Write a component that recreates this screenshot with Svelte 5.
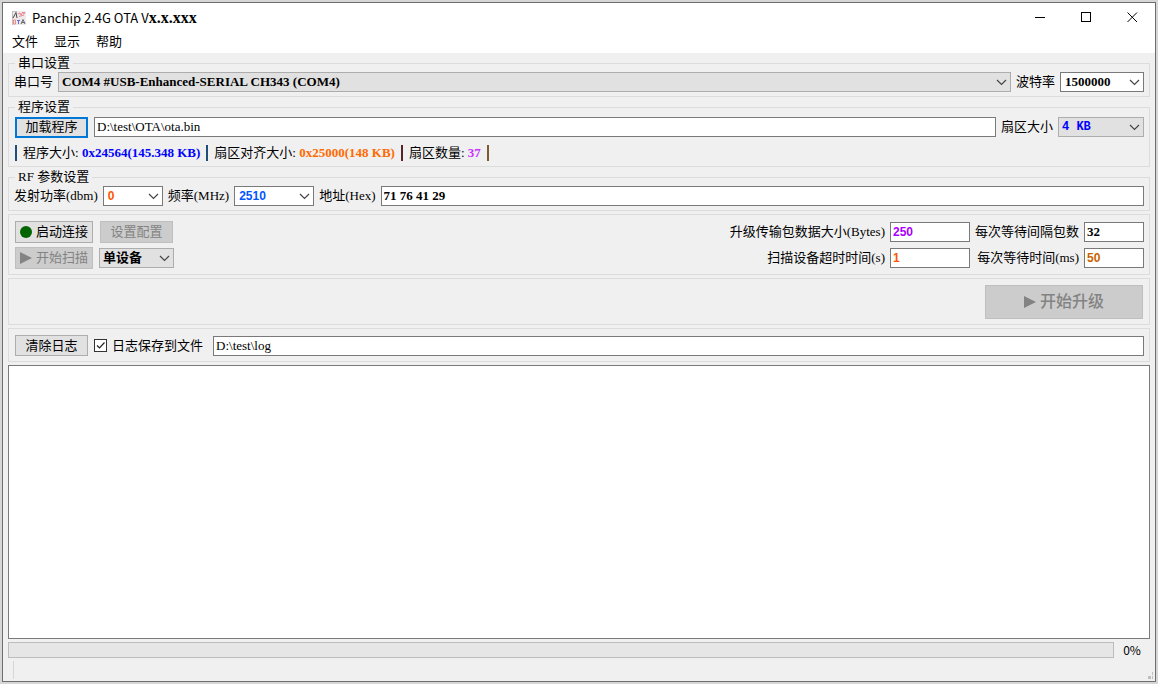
<script lang="ts">
  let port = $state('COM4 #USB-Enhanced-SERIAL CH343 (COM4)');
  let baud = $state('1500000');
  let programPath = $state('D:\\test\\OTA\\ota.bin');
  let sector = $state('4 KB');
  let power = $state('0');
  let freq = $state('2510');
  let address = $state('71 76 41 29');
  let mode = $state('单设备');
  let packetSize = $state('250');
  let packetInterval = $state('32');
  let scanTimeout = $state('1');
  let waitTime = $state('50');
  let saveLog = $state(true);
  let logPath = $state('D:\\test\\log');
  let log = $state('');
  let progress = $state(0);

  const menus = ['文件', '显示', '帮助'];
  const stats = [
    { label: '程序大小', value: '0x24564(145.348 KB)', tone: 'blue' },
    { label: '扇区对齐大小', value: '0x25000(148 KB)', tone: 'orange' },
    { label: '扇区数量', value: '37', tone: 'violet' },
  ];
</script>

{#snippet chevron()}
  <svg class="chevron" viewBox="0 0 11 7" aria-hidden="true">
    <path d="M1 1 L5.5 5.5 L10 1" fill="none" stroke="#444" stroke-width="1.2" />
  </svg>
{/snippet}

{#snippet play()}
  <svg class="play" viewBox="0 0 12 12" aria-hidden="true">
    <path d="M0 0 L12 6 L0 12 Z" fill="#838383" />
  </svg>
{/snippet}

<div class="desktop">
  <div class="window">
    <header class="titlebar">
      <svg class="app-icon" viewBox="0 0 14 14" aria-hidden="true">
        <rect width="14" height="14" fill="#eeeaeb" />
        <path d="M0.5 0 V14 M0 0.5 H5" stroke="#c4bfc0" fill="none" />
        <path d="M1 7 L4 1.5 L5 7" fill="none" stroke="#4a4a4a" />
        <path d="M6 3 L8 2 L9 4 L11 1 L12 3 L13 1 M7 5.5 L12 4" fill="none" stroke="#ee7f8a" />
        <path d="M1.5 9 V13 H3.5 V9 Z" fill="none" stroke="#ec8f80" />
        <path d="M5 9.5 H8 M6.5 9 V13" fill="none" stroke="#6f6ad6" />
        <path d="M9 13 L11 8.5 L13 13 M10 11.5 H13" fill="none" stroke="#666" />
      </svg>
      <h1>Panchip 2.4G OTA V<b>x.x.xxx</b></h1>
      <div class="caption">
        <button aria-label="最小化">
          <svg viewBox="0 0 11 11"><path d="M0 5.5 H10" stroke="#000" /></svg>
        </button>
        <button aria-label="最大化">
          <svg viewBox="0 0 11 11"><rect x="0.5" y="0.5" width="9" height="9" fill="none" stroke="#000" /></svg>
        </button>
        <button aria-label="关闭">
          <svg viewBox="0 0 11 11"><path d="M0.5 0.5 L10 10 M10 0.5 L0.5 10" stroke="#000" /></svg>
        </button>
      </div>
    </header>

    <nav class="menubar">
      {#each menus as item}
        <button>{item}</button>
      {/each}
    </nav>

    <main>
      <fieldset>
        <legend>串口设置</legend>
        <div class="row">
          <label for="port">串口号</label>
          <div class="combo grey grow">
            <select id="port" bind:value={port}><option>{port}</option></select>
            {@render chevron()}
          </div>
          <label for="baud">波特率</label>
          <div class="combo baud">
            <select id="baud" bind:value={baud}><option>{baud}</option></select>
            {@render chevron()}
          </div>
        </div>
      </fieldset>

      <fieldset>
        <legend>程序设置</legend>
        <div class="row program">
          <button class="btn primary">加载程序</button>
          <input class="grow" aria-label="程序文件" bind:value={programPath} />
          <label for="sector">扇区大小</label>
          <div class="combo grey sector">
            <select id="sector" class="mono blue" bind:value={sector}><option>{sector}</option></select>
            {@render chevron()}
          </div>
        </div>
        <div class="stats">
          {#each stats as s}
            <span class="stat {s.tone}-bar">{s.label}: <b class={s.tone}>{s.value}</b></span>
          {/each}
        </div>
      </fieldset>

      <fieldset>
        <legend>RF 参数设置</legend>
        <div class="row">
          <label for="power">发射功率(dbm)</label>
          <div class="combo power">
            <select id="power" class="sans red" bind:value={power}><option>{power}</option></select>
            {@render chevron()}
          </div>
          <label for="freq">频率(MHz)</label>
          <div class="combo freq">
            <select id="freq" class="sans azure" bind:value={freq}><option>{freq}</option></select>
            {@render chevron()}
          </div>
          <label for="address">地址(Hex)</label>
          <input id="address" class="grow strong" bind:value={address} />
        </div>
      </fieldset>

      <section class="panel controls">
        <div class="actions">
          <button class="btn">
            <svg viewBox="0 0 12 12" aria-hidden="true"><circle cx="6" cy="6" r="6" fill="#006400" /></svg>
            启动连接
          </button>
          <button class="btn" disabled>设置配置</button>
          <button class="btn" disabled>{@render play()}开始扫描</button>
          <div class="combo grey">
            <select aria-label="设备模式" bind:value={mode}><option>{mode}</option></select>
            {@render chevron()}
          </div>
        </div>
        <div class="params">
          <label for="packet-size">升级传输包数据大小(Bytes)</label>
          <input id="packet-size" class="sans purple" bind:value={packetSize} />
          <label for="packet-interval">每次等待间隔包数</label>
          <input id="packet-interval" class="strong" bind:value={packetInterval} />
          <label for="scan-timeout">扫描设备超时时间(s)</label>
          <input id="scan-timeout" class="sans red" bind:value={scanTimeout} />
          <label for="wait-time">每次等待时间(ms)</label>
          <input id="wait-time" class="sans amber" bind:value={waitTime} />
        </div>
      </section>

      <section class="panel upgrade">
        <button class="btn large" disabled>{@render play()}开始升级</button>
      </section>

      <section class="panel row">
        <button class="btn">清除日志</button>
        <label class="check">
          <span class="box">
            <input type="checkbox" bind:checked={saveLog} />
            {#if saveLog}
              <svg viewBox="0 0 13 13" aria-hidden="true">
                <path d="M3 6.5 L5.5 9 L10.5 3.5" fill="none" stroke="#222" stroke-width="1.2" />
              </svg>
            {/if}
          </span>
          日志保存到文件
        </label>
        <input class="grow" aria-label="日志目录" bind:value={logPath} />
      </section>

      <textarea class="log" aria-label="日志" readonly bind:value={log}></textarea>

      <div class="progress-row">
        <div class="progress" role="progressbar" aria-label="升级进度" aria-valuenow={progress}>
          <div class="bar" style="width: {progress}%"></div>
        </div>
        <span class="percent">{progress}%</span>
      </div>
    </main>

    <footer class="statusbar">
      <span class="divider"></span>
      <svg class="grip" viewBox="0 0 7 7" aria-hidden="true">
        <path d="M4 0 H5 V3 H4 Z M0 4 H3 V7 H0 Z M4 4 H5 V7 H4 Z" fill="#bfbfbf" />
      </svg>
    </footer>
  </div>
</div>

<style>
  :global(body) {
    margin: 0;
  }

  .desktop {
    --serif: 'Liberation Serif', 'Noto Sans CJK SC', serif;
    --ui: 'Noto Sans CJK SC', sans-serif;
    box-sizing: border-box;
    min-height: 100vh;
    padding: 2px;
    display: flex;
    background: #d6d6d6;
    color: #000;
    font: 13px/16px var(--serif);
  }

  .desktop :global(*) {
    box-sizing: border-box;
  }

  .window {
    flex: 1;
    min-width: 0;
    display: flex;
    flex-direction: column;
    border: 1px solid #6e6e6e;
    background: #f0f0f0;
  }

  button,
  input,
  select,
  textarea {
    margin: 0;
    font: inherit;
    color: inherit;
    border-radius: 0;
    outline: none;
  }

  .titlebar {
    height: 29px;
    padding-left: 9px;
    display: flex;
    align-items: center;
    background: #fff;
  }

  .app-icon {
    width: 14px;
    height: 14px;
    margin-right: 6px;
  }

  h1 {
    flex: 1;
    margin: 0;
    font: 13px/16px var(--ui);
  }

  h1 b {
    font: bold 16px/16px var(--serif);
  }

  .caption {
    display: flex;
  }

  .caption button {
    width: 46px;
    height: 29px;
    padding: 0;
    display: grid;
    place-items: center;
    border: 0;
    background: none;
  }

  .caption svg {
    width: 11px;
    height: 11px;
  }

  .menubar {
    height: 21px;
    padding-left: 1px;
    display: flex;
    background: #fff;
  }

  .menubar button {
    height: 18px;
    padding: 0 8px;
    border: 0;
    background: none;
    font: 13px/18px var(--ui);
  }

  main {
    flex: 1;
    display: flex;
    flex-direction: column;
    gap: 3px;
    padding: 3px 5px 0;
  }

  fieldset,
  .panel {
    min-width: 0;
    margin: 0;
    border: 1px solid #dcdcdc;
  }

  fieldset {
    margin-top: -1px;
    padding: 0 5px 3px;
  }

  legend {
    margin-left: 1px;
    padding: 0 3px;
    line-height: 16px;
  }

  .panel {
    padding: 6px 5px 5px;
  }

  .row {
    display: flex;
    align-items: center;
    gap: 5px;
  }

  fieldset .row {
    min-height: 22px;
  }

  fieldset .program {
    min-height: 24px;
  }

  .grow {
    flex: 1;
    min-width: 0;
  }

  label {
    white-space: nowrap;
  }

  input {
    height: 20px;
    padding: 0 2px;
    border: 1px solid #7a7a7a;
    background: #fff;
  }

  .combo {
    display: grid;
    align-items: center;
    height: 20px;
    border: 1px solid #7a7a7a;
    background: #fff;
    font-weight: bold;
  }

  .combo.grey {
    border-color: #adadad;
    background: #e1e1e1;
  }

  .combo select {
    grid-area: 1 / 1;
    width: 100%;
    height: 18px;
    padding: 0 20px 0 4px;
    appearance: none;
    border: 0;
    background: none;
  }

  .combo.grey select {
    padding-left: 3px;
  }

  .chevron {
    grid-area: 1 / 1;
    justify-self: end;
    width: 11px;
    height: 7px;
    margin-right: 3px;
    pointer-events: none;
  }

  .baud {
    width: 84px;
  }

  .sector {
    width: 86px;
  }

  .power {
    width: 60px;
  }

  .freq {
    width: 80px;
  }

  .btn {
    height: 22px;
    min-width: 73px;
    margin: 0 1px;
    padding: 0 4px;
    display: flex;
    align-items: center;
    justify-content: center;
    gap: 4px;
    border: 1px solid #adadad;
    background: #e1e1e1;
    white-space: nowrap;
  }

  .row .btn {
    height: 21px;
  }

  .btn.primary {
    border: 2px solid #0078d7;
  }

  .btn:disabled {
    border-color: #bfbfbf;
    background: #ccc;
    color: #838383;
  }

  .btn svg {
    width: 12px;
    height: 12px;
  }

  .stats {
    display: flex;
    gap: 6px;
    margin: 6px 0 2px 1px;
  }

  .stat {
    padding-left: 6px;
    border-left: 2px solid;
    white-space: nowrap;
  }

  .stat:last-child {
    padding-right: 6px;
    border-right: 2px solid #7a5c2e;
  }

  .blue-bar,
  .orange-bar {
    border-left-color: #1f4e79;
  }

  .violet-bar {
    border-left-color: #5a2328;
  }

  .strong {
    font-weight: bold;
  }

  .sans {
    font: bold 12px/16px 'Liberation Sans', sans-serif;
  }

  .mono {
    font: bold 12px/16px 'Liberation Mono', monospace;
  }

  .blue {
    color: #00f;
  }

  .orange {
    color: #ff6a00;
  }

  .violet {
    color: #c832ff;
  }

  .red {
    color: #ff5500;
  }

  .azure {
    color: #0055ff;
  }

  .purple {
    color: #aa00ff;
  }

  .amber {
    color: #c86400;
  }

  .controls {
    display: flex;
    justify-content: space-between;
  }

  .actions {
    display: grid;
    grid-template-columns: auto 75px;
    align-items: center;
    gap: 4px 5px;
  }

  .params {
    display: grid;
    grid-template-columns: auto 80px auto 60px;
    align-items: center;
    gap: 4px 5px;
    text-align: right;
  }

  .params input {
    width: 100%;
  }

  .upgrade {
    display: flex;
    justify-content: flex-end;
  }

  .btn.large {
    width: 158px;
    height: 34px;
    font-size: 16px;
    font-weight: 500;
  }

  .check {
    display: flex;
    align-items: center;
    gap: 5px;
    margin-right: 5px;
  }

  .box {
    display: grid;
  }

  .box input,
  .box svg {
    grid-area: 1 / 1;
    width: 13px;
    height: 13px;
  }

  .box input {
    appearance: none;
    padding: 0;
    border-color: #333;
  }

  .box svg {
    pointer-events: none;
  }

  .log {
    flex: 1;
    width: 100%;
    min-height: 120px;
    resize: none;
    border: 1px solid #7a7a7a;
    background: #fff;
  }

  .progress-row {
    display: flex;
    align-items: center;
  }

  .progress {
    flex: 1;
    height: 16px;
    border: 1px solid #bcbcbc;
    background: #e6e6e6;
  }

  .bar {
    height: 100%;
    background: #06b025;
  }

  .percent {
    width: 36px;
    text-align: center;
    font-family: var(--ui);
    font-size: 12px;
  }

  .statusbar {
    height: 23px;
    padding: 3px 0 2px 10px;
    display: flex;
    justify-content: space-between;
    align-items: flex-end;
  }

  .divider {
    width: 1px;
    height: 18px;
    background: #d7d7d7;
  }

  .grip {
    width: 7px;
    height: 7px;
  }
</style>
